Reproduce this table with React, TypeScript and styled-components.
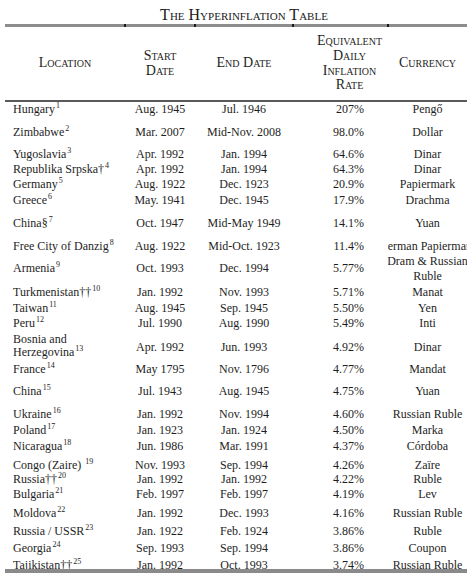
import React from 'react';
import styled, { createGlobalStyle } from 'styled-components';

const COLS = '120px 70px 98px 95px 79px';

interface Entry {
    loc: string[];
    mark?: string;
    note: number;
    spaced?: boolean;
    start: string;
    end: string;
    rate: string;
    currency: string[];
    h: number;
}

const rows: Entry[] = [
    { loc: ['Hungary'], note: 1, start: 'Aug. 1945', end: 'Jul. 1946', rate: '207%', currency: ['Pengő'], h: 23 },
    { loc: ['Zimbabwe'], note: 2, start: 'Mar. 2007', end: 'Mid-Nov. 2008', rate: '98.0%', currency: ['Dollar'], h: 22 },
    { loc: ['Yugoslavia'], note: 3, start: 'Apr. 1992', end: 'Jan. 1994', rate: '64.6%', currency: ['Dinar'], h: 15 },
    { loc: ['Republika Srpska'], mark: '†', note: 4, start: 'Apr. 1992', end: 'Jan. 1994', rate: '64.3%', currency: ['Dinar'], h: 15 },
    { loc: ['Germany'], note: 5, start: 'Aug. 1922', end: 'Dec. 1923', rate: '20.9%', currency: ['Papiermark'], h: 16 },
    { loc: ['Greece'], note: 6, start: 'May. 1941', end: 'Dec. 1945', rate: '17.9%', currency: ['Drachma'], h: 23 },
    { loc: ['China'], mark: '§', note: 7, start: 'Oct. 1947', end: 'Mid-May 1949', rate: '14.1%', currency: ['Yuan'], h: 23 },
    { loc: ['Free City of Danzig'], note: 8, start: 'Aug. 1922', end: 'Mid-Oct. 1923', rate: '11.4%', currency: ['German Papiermark'], h: 22 },
    { loc: ['Armenia'], note: 9, start: 'Oct. 1993', end: 'Dec. 1994', rate: '5.77%', currency: ['Dram & Russian', 'Ruble'], h: 24 },
    { loc: ['Turkmenistan'], mark: '††', note: 10, start: 'Jan. 1992', end: 'Nov. 1993', rate: '5.71%', currency: ['Manat'], h: 16 },
    { loc: ['Taiwan'], note: 11, start: 'Aug. 1945', end: 'Sep. 1945', rate: '5.50%', currency: ['Yen'], h: 15 },
    { loc: ['Peru'], note: 12, start: 'Jul. 1990', end: 'Aug. 1990', rate: '5.49%', currency: ['Inti'], h: 17 },
    { loc: ['Bosnia and', 'Herzegovina'], note: 13, start: 'Apr. 1992', end: 'Jun. 1993', rate: '4.92%', currency: ['Dinar'], h: 29 },
    { loc: ['France'], note: 14, start: 'May 1795', end: 'Nov. 1796', rate: '4.77%', currency: ['Mandat'], h: 22 },
    { loc: ['China'], note: 15, start: 'Jul. 1943', end: 'Aug. 1945', rate: '4.75%', currency: ['Yuan'], h: 23 },
    { loc: ['Ukraine'], note: 16, start: 'Jan. 1992', end: 'Nov. 1994', rate: '4.60%', currency: ['Russian Ruble'], h: 16 },
    { loc: ['Poland'], note: 17, start: 'Jan. 1923', end: 'Jan. 1924', rate: '4.50%', currency: ['Marka'], h: 16 },
    { loc: ['Nicaragua'], note: 18, start: 'Jun. 1986', end: 'Mar. 1991', rate: '4.37%', currency: ['Córdoba'], h: 19 },
    { loc: ['Congo (Zaire)'], note: 19, spaced: true, start: 'Nov. 1993', end: 'Sep. 1994', rate: '4.26%', currency: ['Zaïre'], h: 14 },
    { loc: ['Russia'], mark: '††', note: 20, start: 'Jan. 1992', end: 'Jan. 1992', rate: '4.22%', currency: ['Ruble'], h: 15 },
    { loc: ['Bulgaria'], note: 21, start: 'Feb. 1997', end: 'Feb. 1997', rate: '4.19%', currency: ['Lev'], h: 19 },
    { loc: ['Moldova'], note: 22, start: 'Jan. 1992', end: 'Dec. 1993', rate: '4.16%', currency: ['Russian Ruble'], h: 18 },
    { loc: ['Russia / USSR'], note: 23, start: 'Jan. 1922', end: 'Feb. 1924', rate: '3.86%', currency: ['Ruble'], h: 17 },
    { loc: ['Georgia'], note: 24, start: 'Sep. 1993', end: 'Sep. 1994', rate: '3.86%', currency: ['Coupon'], h: 17 },
    { loc: ['Tajikistan'], mark: '††', note: 25, start: 'Jan. 1992', end: 'Oct. 1993', rate: '3.74%', currency: ['Russian Ruble'], h: 11 },
];

const App: React.FC = () => {
    return (
        <>
            <GlobalStyle />
            <Sheet>
                <Title>The Hyperinflation Table</Title>
                <TopRule>
                    <Segment />
                    <Segment />
                    <Segment />
                    <Segment />
                    <Segment $last />
                </TopRule>
                <HeadRow>
                    <HeadCell>Location</HeadCell>
                    <HeadCell>Start<br />Date</HeadCell>
                    <HeadCell>End Date</HeadCell>
                    <HeadCell $shift={18}>Equivalent<br />Daily<br />Inflation<br />Rate</HeadCell>
                    <HeadCell>Currency</HeadCell>
                </HeadRow>
                <HeadRule />
                {rows.map((r, i) => {
                    const twoLines = r.loc.length > 1;
                    return (
                        <Row key={i} $h={r.h}>
                            <LocCell $tight={twoLines}>
                                {r.loc.map((line, j) => (
                                    <div key={j}>
                                        {line}
                                        {j === r.loc.length - 1 && (
                                            <>
                                                {r.mark}
                                                {r.spaced ? ' ' : ''}
                                                <Sup>{r.note}</Sup>
                                            </>
                                        )}
                                    </div>
                                ))}
                            </LocCell>
                            <DateCell $pad={twoLines ? 7 : 0}>{r.start}</DateCell>
                            <DateCell $pad={twoLines ? 7 : 0}>{r.end}</DateCell>
                            <RateCell $pad={twoLines ? 7 : 0}>{r.rate}</RateCell>
                            <CurrencyCell $pad={twoLines ? 7 : 0} $stacked={r.currency.length > 1}>
                                {r.currency.map((c, j) => (
                                    <span key={j}>{c}</span>
                                ))}
                            </CurrencyCell>
                        </Row>
                    );
                })}
                <BottomRule />
            </Sheet>
        </>
    );
};

const GlobalStyle = createGlobalStyle`
    html, body {
        margin: 0;
        padding: 0;
        background: #ffffff;
    }
    body {
        font-family: "Liberation Serif", "Times New Roman", serif;
        color: #1e1e1e;
    }
`;

const Sheet = styled.div`
    width: 462px;
    height: 574px;
    margin-left: 5px;
    overflow: hidden;
`;

const Title = styled.div`
    height: 24px;
    padding: 5px 0 0 16px;
    box-sizing: border-box;
    text-align: center;
    font-size: 16px;
    line-height: 19px;
    font-variant: small-caps;
    color: #1a1a1a;
`;

const TopRule = styled.div`
    display: grid;
    grid-template-columns: ${COLS};
    height: 3px;
    background: #8c8c8c;
`;

const Segment = styled.div<{ $last?: boolean }>`
    position: relative;
    &::after {
        content: '';
        display: ${p => (p.$last ? 'none' : 'block')};
        position: absolute;
        right: -1px;
        top: 0;
        width: 2px;
        height: 3px;
        background: #1a1a1a;
    }
`;

const HeadRow = styled.div`
    display: grid;
    grid-template-columns: ${COLS};
    height: 73px;
    align-items: center;
    font-size: 14px;
    line-height: 14.7px;
    font-variant: small-caps;
    color: #1e1e1e;
`;

const HeadCell = styled.div<{ $shift?: number }>`
    text-align: center;
    padding-left: ${p => p.$shift || 0}px;
`;

const HeadRule = styled.div`
    height: 2px;
    background: #5a5a5a;
`;

const Row = styled.div<{ $h: number }>`
    display: grid;
    grid-template-columns: ${COLS};
    height: ${p => p.$h}px;
    font-size: 12px;
    line-height: 14px;
    white-space: nowrap;
`;

const LocCell = styled.div<{ $tight?: boolean }>`
    padding-left: 8px;
    line-height: ${p => (p.$tight ? '13px' : '14px')};
`;

const DateCell = styled.div<{ $pad: number }>`
    text-align: center;
    padding-top: ${p => p.$pad}px;
`;

const RateCell = styled.div<{ $pad: number }>`
    text-align: right;
    padding-right: 24px;
    padding-top: ${p => p.$pad}px;
`;

const CurrencyCell = styled.div<{ $pad: number; $stacked?: boolean }>`
    display: flex;
    flex-direction: column;
    align-items: center;
    overflow: hidden;
    padding-top: ${p => p.$pad}px;
    line-height: ${p => (p.$stacked ? '15px' : '14px')};
    margin-top: ${p => (p.$stacked ? '-7px' : '0')};
    height: ${p => (p.$stacked ? '30px' : 'auto')};
`;

const Sup = styled.sup`
    font-size: 8px;
    line-height: 0;
    vertical-align: baseline;
    position: relative;
    top: -5px;
    margin-left: 1px;
`;

const BottomRule = styled.div`
    position: relative;
    height: 4px;
    background: #8a8a8a;
`;

export default App;
